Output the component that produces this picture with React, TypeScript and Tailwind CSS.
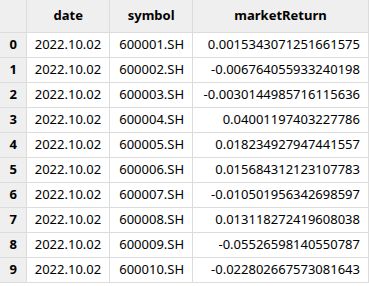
import React from "react";

const rows: [string, string, string][] = [
  ["2022.10.02", "600001.SH", "0.0015343071251661575"],
  ["2022.10.02", "600002.SH", "-0.006764055933240198"],
  ["2022.10.02", "600003.SH", "-0.0030144985716115636"],
  ["2022.10.02", "600004.SH", "0.04001197403227786"],
  ["2022.10.02", "600005.SH", "0.018234927947441557"],
  ["2022.10.02", "600006.SH", "0.015684312123107783"],
  ["2022.10.02", "600007.SH", "-0.010501956342698597"],
  ["2022.10.02", "600008.SH", "0.013118272419608038"],
  ["2022.10.02", "600009.SH", "-0.05526598140550787"],
  ["2022.10.02", "600010.SH", "-0.022802667573081643"],
];

export default function App() {
  return (
    <div className="w-[369px] h-[286px] bg-white" style={{ fontFamily: '"Noto Sans", "Open Sans", sans-serif' }}>
      <table className="border-collapse text-[13px] text-black leading-none">
        <thead>
          <tr className="h-[32px] bg-[#efefef]">
            <th className="w-[27px] border-r border-b border-[#dcdcdc]"></th>
            <th className="w-[83px] border-r border-b border-[#dcdcdc] font-bold text-center">date</th>
            <th className="w-[83px] border-r border-b border-[#dcdcdc] font-bold text-center">symbol</th>
            <th className="w-[176px] border-r border-b border-[#dcdcdc] font-bold text-center">marketReturn</th>
          </tr>
        </thead>
        <tbody>
          {rows.map((r, i) => (
            <tr key={i} className="h-[25px]">
              <td className="bg-[#efefef] border-r border-b border-[#dcdcdc] font-bold text-center">{i}</td>
              <td className="border-r border-b border-[#dcdcdc] text-right pr-[8px]">{r[0]}</td>
              <td className="border-r border-b border-[#dcdcdc] text-right pr-[8px]">{r[1]}</td>
              <td className="border-r border-b border-[#dcdcdc] text-right pr-[8px]">{r[2]}</td>
            </tr>
          ))}
        </tbody>
      </table>
    </div>
  );
}
